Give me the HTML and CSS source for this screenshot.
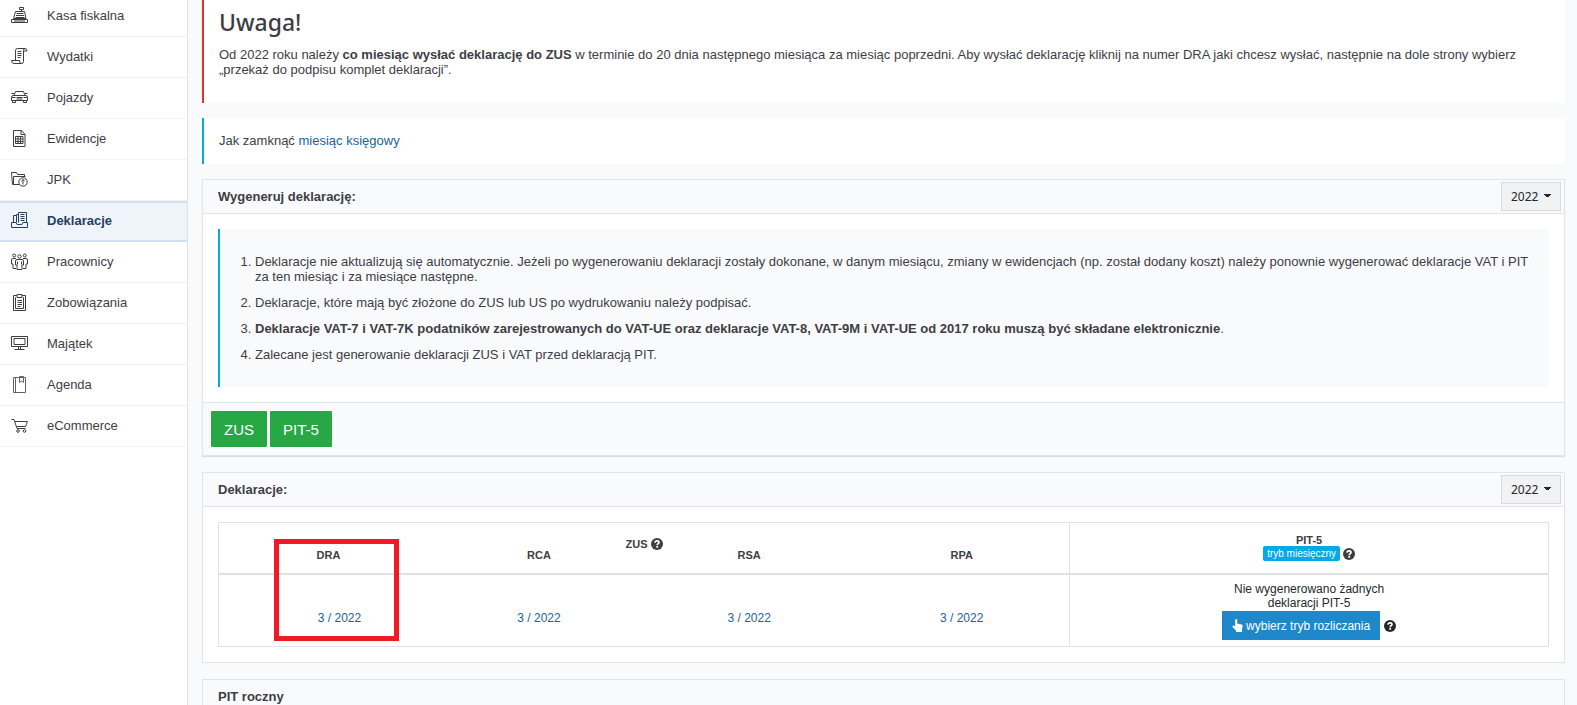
FILE: index.html
```html
<!DOCTYPE html>
<html lang="pl">
<head>
<meta charset="utf-8">
<title>Deklaracje</title>
<meta name="viewport" content="width=device-width, initial-scale=1">
<link rel="stylesheet" href="styles.css">
</head>
<body>
<svg class="defs" aria-hidden="true">
  <symbol id="question" viewBox="0 0 12 12">
    <circle cx="6" cy="6" r="6" fill="currentColor"/>
    <path d="M4 4.600C4.100 3.300 5 2.800 6 2.800C7.200 2.800 8 3.500 8 4.400C8 5.700 6.200 5.700 6.200 7.200" fill="none" stroke="#fff" stroke-width="1.700"/>
    <rect x="5.300" y="8" width="1.800" height="1.700" fill="#fff"/>
  </symbol>
</svg>
<div class="page">
  <nav class="sidebar">
    <a class="item" href="#kasa"><svg class="icon" viewBox="0 0 17 17"><path d="M8.500.500h4v2h-4zM10.500 2.500v2M4.500 4.500h9l1.500 7H2.500zM5.500 6.500h7M5 8.500h8M4.500 10.500h9M.500 12.500h16v3H.500zM3 14h11"/></svg>Kasa fiskalna</a>
    <a class="item" href="#wydatki"><svg class="icon" viewBox="0 0 17 17"><path d="M4.500 12.500V2.500q0-2 2-2H14M14 .500q-1.500 0-1.500 2v11q0 2-2 2M14 .500q2 0 2 2.500h-3.500M.500 12.500h8q0 3 2 3H3q-2.500 0-2.500-3M6.500 3.500h4M6.500 5.500h4M6.500 7.500h4M6.500 9.500h3"/></svg>Wydatki</a>
    <a class="item" href="#pojazdy"><svg class="icon" viewBox="0 0 17 17"><path d="M3 6.500l1.500-4h8l1.500 4M2 6.500h13q1.500 0 1.500 2v3h-16v-3q0-2 1.500-2zM.500 4.500h2.500M14 4.500h2.500M1.500 11.500v2h3v-2M12.500 11.500v2h3v-2M1 8.500h3.500M12.500 8.500H16M5.500 8.500h6M5.500 10h6"/></svg>Pojazdy</a>
    <a class="item" href="#ewidencje"><svg class="icon" viewBox="0 0 17 17"><path d="M2.500.500h8l3.500 4v12H2.500zM10 .500v4h4M4.500 6.500h7.500v7H4.500zM4.500 9h7.500M4.500 11.500h7.500M7 6.500v7M9.500 6.500v7"/></svg>Ewidencje</a>
    <a class="item" href="#jpk"><svg class="icon" viewBox="0 0 17 17"><path d="M8 13.500H1.500L.500 1.500h5l1 2h7v2.500M2.500 13.500v-8h12"/><circle cx="12" cy="11" r="4.200"/><path d="M12 13.500v-5M10.300 10.200 12 8.500l1.700 1.700"/></svg>JPK</a>
    <a class="item item--active" href="#deklaracje" aria-current="page"><svg class="icon" viewBox="0 0 17 17"><path d="M2.500 10.500v-7h3M5.500 10.500v-8h2M7.500 10.500V.500h8v10M9.500 2.500h4M9.500 4.500h4M9.500 6.500h4M9.500 8.500h4M.500 10.500h4.500l1 2h5l1-2h4.500v5H.500z"/></svg>Deklaracje</a>
    <a class="item" href="#pracownicy"><svg class="icon" viewBox="0 0 17 17"><circle cx="3.200" cy="2.500" r="1.500"/><circle cx="8.500" cy="3.500" r="1.700"/><circle cx="13.800" cy="2.500" r="1.500"/><path d="M5 5.500H2q-1.500 0-1.500 1.500v4h1.500v4.500h3M12 5.500h3q1.500 0 1.500 1.500v4H15v4.500h-3M6 6.500h5q1.500 0 1.500 1.500v4H11v4.500H6V12H4.500V8q0-1.500 1.500-1.500zM6.500 8.500v3M10.500 8.500v3"/></svg>Pracownicy</a>
    <a class="item" href="#zobowiazania"><svg class="icon" viewBox="0 0 17 17"><path d="M6 1.500H2.500v15h12v-15H11M5 3.500h-.500v11h8v-11H12M6 .500h5v3H6zM6.500 6.500h4.500M6.500 8.500h4.500M6.500 10.500h4.500M6.500 12.500h3"/></svg>Zobowiązania</a>
    <a class="item" href="#majatek"><svg class="icon" viewBox="0 0 17 17"><path d="M.500 1.500h16v10H.500zM3 3.500h11v6H3zM7.500 11.500v3M9.500 11.500v3M3.500 14.500h10"/></svg>Majątek</a>
    <a class="item" href="#agenda"><svg class="icon icon--soft" viewBox="0 0 17 17"><path d="M2.500 1.500h12v15h-12zM4.500 1.500v15M8.500.500h4v6l-2-1.500-2 1.500z"/></svg>Agenda</a>
    <a class="item" href="#ecommerce"><svg class="icon" viewBox="0 0 17 17"><path d="M.500 2.500H3l3 9h8.500M4 4.500h12.500l-2 5H6"/><circle cx="7" cy="14" r="1.300"/><circle cx="13.500" cy="14" r="1.300"/></svg>eCommerce</a>
  </nav>

  <main class="content">
    <section class="notice notice--danger">
      <h2 class="notice-title">Uwaga!</h2>
      <p class="notice-text">Od 2022 roku należy <strong>co miesiąc wysłać deklarację do ZUS</strong> w terminie do 20 dnia następnego miesiąca za miesiąc poprzedni. Aby wysłać deklarację kliknij na numer DRA jaki chcesz wysłać, następnie na dole strony wybierz „przekaż do podpisu komplet deklaracji”.</p>
    </section>

    <section class="notice">Jak zamknąć <a class="link" href="#miesiac">miesiąc księgowy</a></section>

    <section class="card card--raised">
      <header class="card-header">
        <h3 class="card-title">Wygeneruj deklarację:</h3>
        <select class="year" aria-label="Rok generowania"><option>2022</option></select>
      </header>
      <div class="card-body">
        <div class="tips">
          <ol class="tips-list">
            <li>Deklaracje nie aktualizują się automatycznie. Jeżeli po wygenerowaniu deklaracji zostały dokonane, w danym miesiącu, zmiany w ewidencjach (np. został dodany koszt) należy ponownie wygenerować deklaracje VAT i PIT za ten miesiąc i za miesiące następne.</li>
            <li>Deklaracje, które mają być złożone do ZUS lub US po wydrukowaniu należy podpisać.</li>
            <li><strong>Deklaracje VAT-7 i VAT-7K podatników zarejestrowanych do VAT-UE oraz deklaracje VAT-8, VAT-9M i VAT-UE od 2017 roku muszą być składane elektronicznie</strong>.</li>
            <li>Zalecane jest generowanie deklaracji ZUS i VAT przed deklaracją PIT.</li>
          </ol>
        </div>
      </div>
      <footer class="card-footer">
        <button class="btn-green" type="button">ZUS</button>
        <button class="btn-green" type="button">PIT-5</button>
      </footer>
    </section>

    <section class="card">
      <header class="card-header">
        <h3 class="card-title">Deklaracje:</h3>
        <select class="year" aria-label="Rok deklaracji"><option>2022</option></select>
      </header>
      <div class="card-body table-area">
        <table class="table">
          <colgroup><col class="col-edge"><col class="col-mid"><col class="col-mid"><col class="col-edge"><col></colgroup>
          <thead>
            <tr class="row-group">
              <th class="group" colspan="4">ZUS <svg class="help"><use href="#question"/></svg></th>
              <th class="pit-head" rowspan="2">PIT-5<div class="mode"><span class="badge">tryb miesięczny</span><svg class="help"><use href="#question"/></svg></div></th>
            </tr>
            <tr class="row-names"><th class="dra">DRA</th><th>RCA</th><th>RSA</th><th>RPA</th></tr>
          </thead>
          <tbody>
            <tr>
              <td class="first"><a class="link" href="#dra">3 / 2022</a></td>
              <td><a class="link" href="#rca">3 / 2022</a></td>
              <td><a class="link" href="#rsa">3 / 2022</a></td>
              <td><a class="link" href="#rpa">3 / 2022</a></td>
              <td class="pit">Nie wygenerowano żadnych<br>deklaracji PIT-5
                <div class="pit-action"><button class="btn-blue" type="button"><svg class="hand" viewBox="0 0 11 13"><path d="M3.200 1q0-1 1-1t1 1v3.500l4.300 1q1.300.300 1.200 1.600L10 10v3H4v-1.500L.500 8Q0 7 1 6.500t2.200 1z" fill="currentColor"/></svg>wybierz tryb rozliczania</button><svg class="help"><use href="#question"/></svg></div>
              </td>
            </tr>
          </tbody>
        </table>
        <div class="marker"></div>
      </div>
    </section>

    <section class="card">
      <header class="card-header"><h3 class="card-title">PIT roczny</h3></header>
    </section>
  </main>
</div>
</body>
</html>
```

FILE: styles.css
```css
* { box-sizing: border-box; }

body {
  margin: 0;
  background: #f9fafc;
  color: #3e3d44;
  font: 13px/15px "Liberation Sans", Arial, sans-serif;
}

.defs { position: absolute; width: 0; height: 0; }

.page {
  display: flex;
  height: 100vh;
  overflow: hidden;
}

.sidebar {
  flex: 0 0 188px;
  margin-top: -4px;
  background: #fff;
  border-right: 1px solid #dfe2e6;
}

.item {
  display: flex;
  align-items: center;
  gap: 19px;
  height: 41px;
  padding: 0 11px 2px;
  border-bottom: 1px solid #f2f3f4;
  color: #3e3d44;
  text-decoration: none;
}

.item--active {
  padding-bottom: 0;
  background: #eff4fb;
  border-bottom: 2px solid #cfe1f0;
  box-shadow: inset 0 2px #cfe1f0;
  color: #24405e;
  font-weight: bold;
}

.icon {
  flex: none;
  width: 17px;
  height: 17px;
  fill: none;
  stroke: currentColor;
  stroke-width: 1;
}

.icon--soft { opacity: 0.8; }

.content {
  flex: 1;
  min-width: 0;
  padding: 0 12px 0 14px;
}

.notice {
  margin-bottom: 15px;
  padding: 15px 15px 16px;
  background: #fff;
  border-left: 2px solid #04a9e7;
}

.notice--danger {
  padding: 8px 15px 26px;
  border-color: #e63226;
}

.notice-title {
  margin: 0 0 11px;
  font: 500 23px/28px "Noto Sans", sans-serif;
}

.notice-text { margin: 0; }

.link {
  color: #1a6299;
  text-decoration: none;
}

.card {
  margin-bottom: 16px;
  background: #fff;
  border: 1px solid #e2e4e7;
}

.card--raised { box-shadow: 0 1px 1px #dcdee1; }

.card-header {
  display: flex;
  align-items: center;
  justify-content: space-between;
  height: 34px;
  padding: 0 3px 1px 15px;
  background: #f9fafc;
  border-bottom: 1px solid #dfe2e6;
}

.card-title {
  margin: 0;
  font-size: 13px;
  font-weight: bold;
}

.year {
  width: 60px;
  height: 29px;
  padding: 0 0 0 9px;
  appearance: none;
  background:
    linear-gradient(#25282b, #25282b) 42px 11px / 7px 1px no-repeat,
    linear-gradient(#25282b, #25282b) 43px 12px / 5px 1px no-repeat,
    linear-gradient(#25282b, #25282b) 44px 13px / 3px 1px no-repeat,
    #f1f2f4;
  border: 1px solid #d9dbde;
  border-radius: 0;
  color: #25282b;
  font: 12px "Noto Sans", sans-serif;
}

.card-body { padding: 15px; }

.tips {
  padding: 25px 15px;
  background: #f9fafc;
  border-left: 2px solid #04a9e7;
}

.tips-list {
  margin: 0;
  padding-left: 20px;
}

.tips-list li { margin-bottom: 11px; }
.tips-list li:last-child { margin-bottom: 0; }

.card-footer {
  display: flex;
  gap: 3px;
  padding: 8px;
  background: #f9fafc;
  border-top: 1px solid #dfe2e6;
}

.btn-green {
  height: 36px;
  padding: 0 13px;
  background: #28a745;
  border: 0;
  border-radius: 1px;
  color: #fff;
  font: 15px "Liberation Sans", Arial, sans-serif;
}

.table-area { position: relative; }

.table {
  width: 100%;
  table-layout: fixed;
  border-collapse: collapse;
  border: 1px solid #dee1e5;
  font-size: 12px;
  line-height: 14px;
  text-align: center;
}

.col-edge { width: 16.2%; }
.col-mid { width: 15.8%; }

.table th {
  padding: 0;
  font-size: 11px;
  line-height: 11px;
}

.row-group { height: 27px; }
.row-names { height: 24px; }

.table .group { vertical-align: bottom; }
.row-names th { vertical-align: top; }

.table .dra { padding-left: 4px; }

.table tbody { border-top: 2px solid #dee1e5; }

.table td {
  padding: 15px 0 0;
  height: 73px;
}

.table .first { padding-left: 26px; }

.table .pit-head,
.table .pit { border-left: 1px solid #dee1e5; }

.table .pit-head { padding-top: 1px; }

.table .pit {
  padding: 2px 0 0;
  color: #25282b;
}

.help {
  width: 12px;
  height: 12px;
  vertical-align: -2px;
}

.mode {
  display: flex;
  align-items: center;
  justify-content: center;
  gap: 3px;
}

.badge {
  padding: 2px 4px;
  background: #04a9e7;
  border-radius: 2px;
  color: #fff;
  font-size: 10px;
  font-weight: normal;
}

.pit-action {
  display: flex;
  align-items: center;
  justify-content: center;
  gap: 4px;
  margin-top: 1px;
}

.btn-blue {
  display: flex;
  align-items: center;
  gap: 3px;
  height: 29px;
  padding: 0 10px;
  background: #1e88cb;
  border: 0;
  color: #fff;
  font: 12px "Liberation Sans", Arial, sans-serif;
}

.hand {
  width: 11px;
  height: 13px;
}

/* Highlight frame laid over the DRA column */
.marker {
  position: absolute;
  top: 32px;
  left: 71px;
  width: 125px;
  height: 102px;
  border: 5px solid #ee1b24;
}
```
